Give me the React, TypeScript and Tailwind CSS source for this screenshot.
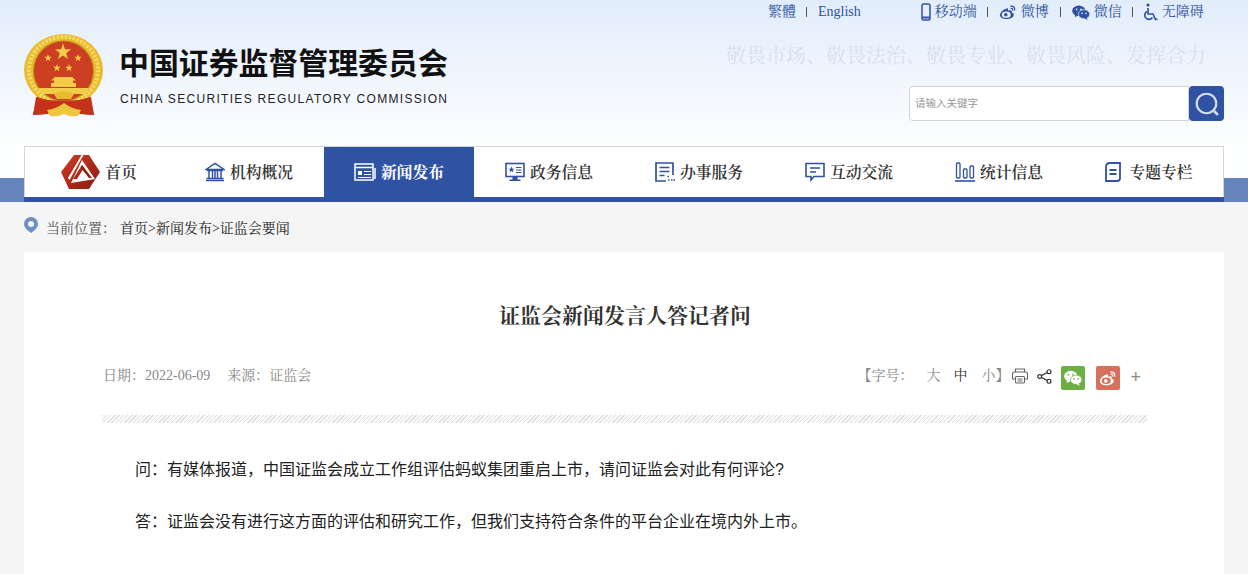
const serif = "font-['Liberation_Serif','Noto_Serif_CJK_SC','Noto_Sans_CJK_SC',serif]";
const sans = "font-['Liberation_Sans','Noto_Sans_CJK_SC',sans-serif]";

function Star({ x, y, r }: { x: number; y: number; r: number }) {
  const pts = Array.from({ length: 10 }, (_, i) => {
    const a = -Math.PI / 2 + (i * Math.PI) / 5;
    const d = i % 2 === 0 ? r : r * 0.4;
    return `${x + d * Math.cos(a)},${y + d * Math.sin(a)}`;
  }).join(" ");
  return <polygon points={pts} fill="#f3cc4a" />;
}

function Emblem() {
  return (
    <svg viewBox="0 0 80 84" className="h-[84px] w-[80px] shrink-0">
      <path d="M14 58 9 81l14-1 17-5 17 5 13 1-5-23z" fill="#c4321c" />
      <ellipse cx="39.500" cy="36" rx="39.500" ry="36" fill="#e9bb2e" />
      <ellipse cx="39.500" cy="36" rx="34.500" ry="33" fill="none" stroke="#f5d866" strokeWidth="4" strokeDasharray="2.500 1.500" />
      <circle cx="39.500" cy="37" r="30.500" fill="#b98d1f" />
      <circle cx="39.500" cy="37" r="29.500" fill="#cd3f22" />
      <Star x={39} y={18} r={8.500} />
      <Star x={24} y={24} r={4} />
      <Star x={54} y={24} r={4} />
      <Star x={33} y={34} r={4} />
      <Star x={45} y={34} r={4} />
      <path d="M31 43h17l4 3.500h-3V49h3v4H27v-4h3v-2.500h-3z" fill="#f3cc4a" />
      <path d="M14 54h51l-3 6H17z" fill="#f3cc4a" />
      <path d="M24 66 12 63l-3 18 14-1 17-5 17 5 13 1-3-18-12 3-15 1z" fill="#c4321c" />
      <path d="M30 60q10-6 20 0l-3 5H33z" fill="#e8bb31" />
      <path d="M23 76q9-1 17-7 8 6 17 7l-3 6q-8 1-14-2-6 3-14 2z" fill="#f0c63d" />
    </svg>
  );
}

function HomeLogo() {
  return (
    <svg viewBox="0 0 39 34" className="h-[34px] w-[39px]">
      <defs>
        <linearGradient id="homeA" x1="0" x2="1" y1="0" y2="1">
          <stop offset="0" stopColor="#d23c24" />
          <stop offset="1" stopColor="#8a1a12" />
        </linearGradient>
      </defs>
      <path d="M13 0h15l11 17-11 17H8L0 17z" fill="url(#homeA)" />
      <path d="M20.500 0h2L8.500 25 7 23z" fill="#fff" />
      <path d="M21 5 34 24 10 28z" fill="#fff" />
      <path d="M21 10l2 3-7 11h-4z" fill="#b02a18" />
      <path d="M21 10l10 13h-3l-8-10z" fill="#8f1c12" />
    </svg>
  );
}

const navIcon = "h-[22px] w-[22px] shrink-0";

function BankIcon() {
  return (
    <svg viewBox="0 0 20 20" fill="none" stroke="#2f52a2" strokeWidth="1.500" className="h-[20px] w-[20px] shrink-0">
      <path d="M1 7.500 10 1.500l9 6zM2 8.500h16M1 18.500h18M1.500 16.500h17M4 9v7M7.500 9v7M12.500 9v7M16 9v7M10 9v7" />
    </svg>
  );
}

function NewsIcon() {
  return (
    <svg viewBox="0 0 22 20" fill="none" stroke="#fff" strokeWidth="1.500" className={navIcon}>
      <rect x="1" y="2" width="18" height="16" />
      <path d="M1 5.500h18M21 6v11" />
      <rect x="4" y="9" width="4" height="4" fill="#fff" stroke="none" />
      <path d="M10 9.500h7M10 12.500h7M4 15.500h13" strokeWidth="1.200" />
    </svg>
  );
}

function ScreenIcon() {
  return (
    <svg viewBox="0 0 20 20" className="h-[20px] w-[20px] shrink-0">
      <rect x="1" y="1.500" width="18" height="13" fill="none" stroke="#2f52a2" strokeWidth="1.600" />
      <path d="M6.500 4.500l.9 2.200h2.200l-1.800 1.400.7 2.300-2-1.400-2 1.400.7-2.300-1.800-1.400h2.200z" fill="#2f52a2" />
      <path d="M11 5.500h5.500M11 8h5.500M11 10.500h5.500" stroke="#2f52a2" strokeWidth="1.200" />
      <path d="M7.500 15h5v2.500h3V19h-11v-1.500h3z" fill="#2f52a2" />
    </svg>
  );
}

function ListIcon() {
  return (
    <svg viewBox="0 0 20 20" fill="none" stroke="#2f52a2" strokeWidth="1.700" className="h-[20px] w-[20px] shrink-0">
      <path d="M18 13V1H1v18h10" />
      <path d="M4.500 5.500h10M4.500 9.500h10M4.500 13.500h5" />
      <path d="M13 18h1.500M16 18h1.500M18.500 18H20M12.500 14.500h1.500" strokeWidth="1.500" />
    </svg>
  );
}

function ChatIcon() {
  return (
    <svg viewBox="0 0 20 20" fill="none" stroke="#2f52a2" strokeWidth="1.600" className="h-[20px] w-[20px] shrink-0">
      <path d="M1 1.500h18v13H9l-3 3.500v-3.500H1z" />
      <path d="M5 6h10M5 10h6" />
    </svg>
  );
}

function ChartIcon() {
  return (
    <svg viewBox="0 0 20 20" fill="none" stroke="#2f52a2" strokeWidth="1.300" className="h-[20px] w-[20px] shrink-0">
      <rect x="1.500" y="1" width="3.500" height="15" rx="1" />
      <rect x="8.500" y="7" width="3.500" height="9" rx="1" />
      <rect x="15" y="4" width="3.500" height="12" rx="1" />
      <path d="M0 19h20" strokeWidth="1.600" />
    </svg>
  );
}

function DocIcon() {
  return (
    <svg viewBox="0 0 16 20" fill="none" stroke="#2f52a2" strokeWidth="1.800" className="mr-[3px] h-[20px] w-[16px] shrink-0">
      <path d="M5 1h10v15q0 3-3 3H1V5q0-4 4-4z" />
      <path d="M4.500 8h7M4.500 12h7" strokeWidth="2" />
    </svg>
  );
}

const navItems = [
  { label: "首页", icon: <HomeLogo /> },
  { label: "机构概况", icon: <BankIcon /> },
  { label: "新闻发布", icon: <NewsIcon />, active: true },
  { label: "政务信息", icon: <ScreenIcon /> },
  { label: "办事服务", icon: <ListIcon /> },
  { label: "互动交流", icon: <ChatIcon /> },
  { label: "统计信息", icon: <ChartIcon /> },
  { label: "专题专栏", icon: <DocIcon /> },
];

function WeiboGlyph({ fill, eye }: { fill: string; eye: string }) {
  return (
    <svg viewBox="0 0 20 18" className="h-full w-full">
      <path d="M8.500 5C4.500 6 1 9.500 1 12.500 1 15.500 4.500 17 8.500 17c4.500 0 8-2.500 8-5 0-1.500-1.500-2-2.500-2.300 1-2-.3-3.200-3.500-2.200-.3.100-.5 0-.4-.3.300-1.700-.300-2.700-1.600-2.200z" fill={fill} />
      <ellipse cx="8" cy="12" rx="5" ry="3.600" fill={eye} />
      <circle cx="7.500" cy="12.200" r="2" fill={fill} />
      <path d="M13 2.500c3-.6 5 1.500 4.500 4.500M13.500 5c1.400-.2 2 .6 1.800 1.800" fill="none" stroke={fill} strokeWidth="1.400" strokeLinecap="round" />
    </svg>
  );
}

function WechatGlyph({ fill, eye }: { fill: string; eye: string }) {
  return (
    <svg viewBox="0 0 20 17" className="h-full w-full">
      <ellipse cx="7.500" cy="6.500" rx="7.500" ry="6" fill={fill} />
      <path d="M3.500 10.500 3 14l3.500-2z" fill={fill} />
      <circle cx="5" cy="5" r="1" fill={eye} />
      <circle cx="10" cy="5" r="1" fill={eye} />
      <ellipse cx="13.500" cy="10.500" rx="6.500" ry="5.200" fill={fill} stroke={eye} strokeWidth="0.800" />
      <path d="M16.500 14.500 17.500 17l-3.500-1.800z" fill={fill} />
      <circle cx="11.300" cy="9.500" r=".9" fill={eye} />
      <circle cx="15.700" cy="9.500" r=".9" fill={eye} />
    </svg>
  );
}

function TopSep() {
  return <span className="ml-[10px] mr-[11px] h-[10px] w-px bg-[#555]" />;
}

function TopBar() {
  return (
    <div className={`${serif} flex h-[24px] items-center text-[14px] leading-none text-[#2f52a2]`}>
      <span className="ml-[768px]">繁體</span>
      <TopSep />
      <span>English</span>
      <svg viewBox="0 0 10 18" className="ml-[60px] h-[18px] w-[10px]" fill="none" stroke="#2f52a2" strokeWidth="1.500">
        <rect x="1" y="1" width="8" height="16" rx="1.500" />
        <path d="M1 14.500h8" strokeWidth="2" />
      </svg>
      <span className="ml-[4px]">移动端</span>
      <TopSep />
      <span className="h-[16px] w-[18px]"><WeiboGlyph fill="#2f52a2" eye="#e9f0fb" /></span>
      <span className="ml-[4px] mr-[1px]">微博</span>
      <TopSep />
      <span className="h-[15px] w-[18px]"><WechatGlyph fill="#2f52a2" eye="#e9f0fb" /></span>
      <span className="ml-[4px]">微信</span>
      <TopSep />
      <svg viewBox="0 0 14 18" className="h-[18px] w-[14px]" fill="none" stroke="#2f52a2" strokeWidth="1.600">
        <circle cx="4" cy="2" r="1.600" fill="#2f52a2" stroke="none" />
        <path d="M4 5v6h5l2.500 5.500L13.500 16" />
        <path d="M3 8.500a4.200 4.200 0 1 0 5.500 6" />
      </svg>
      <span className="ml-[4px]">无障碍</span>
    </div>
  );
}

function Header() {
  return (
    <header className="h-[146px] bg-gradient-to-b from-[#e2edfb] to-[#fdfeff]">
      <TopBar />
      <div className="flex">
        <div className="ml-[24px] mt-[10px]"><Emblem /></div>
        <div className={`${sans} ml-[16px] mt-[21px] w-[330px]`}>
          <div className="-ml-[1px] text-[29.900px] font-bold leading-[38px] whitespace-nowrap text-[#111]">中国证券监督管理委员会</div>
          <div className="mt-[8px] text-[12px] leading-[16px] tracking-[1.310px] whitespace-nowrap text-[#222]">CHINA SECURITIES REGULATORY COMMISSION</div>
        </div>
        <div className="ml-[276px] flex flex-col items-end">
          <div className={`${serif} mt-[20px] whitespace-nowrap text-[20px] leading-[24px] text-[#d8e0ee]`}>敬畏市场、敬畏法治、敬畏专业、敬畏风险、发挥合力</div>
          <div className="mt-[18px] mr-[-18px] flex h-[35px] w-[315px]">
            <div className={`${sans} flex flex-1 items-center rounded-l-[4px] border border-[#d3d3d3] bg-white pl-[5px] text-[10.500px] text-[#999]`}>请输入关键字</div>
            <div className="flex w-[35px] items-center justify-center rounded-[4px] bg-[#2f52a2]">
              <svg viewBox="0 0 24 24" fill="none" className="h-[26px] w-[26px]">
                <circle cx="11.500" cy="11.500" r="9" stroke="#d5deef" strokeWidth="2" />
                <path d="M18.500 18.500 22 22" stroke="#d5deef" strokeWidth="2.500" />
              </svg>
            </div>
          </div>
        </div>
      </div>
    </header>
  );
}

function Nav() {
  return (
    <div className="h-[56px] bg-[linear-gradient(to_bottom,#fdfeff_32px,#6484bb_32px)] px-[24px]">
      <nav className="flex h-full border-t border-b-[5px] border-t-[#d4d4d4] border-b-[#2f52a2] bg-white shadow-[inset_1px_0_#d4d4d4,inset_-1px_0_#d4d4d4]">
        {navItems.map((item) => (
          <div
            key={item.label}
            className={`${serif} flex flex-1 items-center justify-center gap-[5px] text-[15.800px] ${item.active ? "bg-[#2f52a2] font-bold text-white" : "font-semibold text-[#333]"}`}
          >
            {item.icon}
            <span className="whitespace-nowrap pt-[2px]">{item.label}</span>
          </div>
        ))}
      </nav>
    </div>
  );
}

function Breadcrumb() {
  return (
    <div className={`${serif} flex h-[50px] items-center pl-[24px] pt-[2px] text-[14px] text-[#222]`}>
      <svg viewBox="0 0 14 16" className="h-[16px] w-[14px] -translate-y-[3px]">
        <path d="M7 0a7 7 0 0 1 7 7c0 3.500-3.500 6.500-7 9-3.500-2.500-7-5.500-7-9a7 7 0 0 1 7-7z" fill="#6c8fc4" />
        <circle cx="7" cy="7" r="3" fill="#f5f5f5" />
      </svg>
      <span className="ml-[8px] text-[#555]">当前位置：</span>
      <span className="ml-[4px]">首页&gt;新闻发布&gt;证监会要闻</span>
    </div>
  );
}

function Article() {
  return (
    <article className="mx-[24px] h-[322px] bg-white px-[78px]">
      <h1 className={`${serif} pt-[49px] pl-[2px] text-center text-[21px] font-bold leading-[30px] text-[#333]`}>证监会新闻发言人答记者问</h1>
      <div className={`${serif} mt-[29px] flex h-[30px] items-center text-[14px] text-[#888]`}>
        <span className="ml-[1px]">日期：2022-06-09</span>
        <span className="ml-[17px]">来源：证监会</span>
        <div className="ml-auto flex items-center">
          <span>【字号：</span>
          <span className="ml-[13px]">大</span>
          <span className="ml-[13px] text-[#333]">中</span>
          <span className="ml-[14px]">小】</span>
          <svg viewBox="0 0 18 16" fill="none" stroke="#666" strokeWidth="1.100" className="ml-[2px] mt-[2px] h-[16px] w-[18px]">
            <path d="M4.500 4V1h9v3M4.500 11H1.500V6q0-2 2-2h11q2 0 2 2v5h-3" />
            <rect x="4.500" y="8.500" width="9" height="6.500" rx="1" />
            <path d="M6.500 11h5M6.500 13h5" />
          </svg>
          <svg viewBox="0 0 14 14" fill="none" stroke="#333" strokeWidth="1.100" className="ml-[8px] mt-[2px] h-[15px] w-[15px]">
            <circle cx="2.500" cy="7" r="1.800" />
            <circle cx="11.200" cy="2.500" r="1.800" />
            <circle cx="11.200" cy="11.500" r="1.800" />
            <path d="M4 6.200 9.600 3.300M4 7.800l5.600 2.900" />
          </svg>
          <span className="ml-[9px] mt-[6px] h-[24px] w-[24px] rounded-[2px] bg-[#6cb043] p-[3px]"><WechatGlyph fill="#fff" eye="#6cb043" /></span>
          <span className="ml-[11px] mt-[6px] h-[24px] w-[24px] rounded-[2px] bg-[#d6705c] p-[3px]"><WeiboGlyph fill="#fff" eye="#d6705c" /></span>
          <span className={`${sans} ml-[10px] mr-[5px] mt-[3px] text-[18px] font-light leading-none text-[#888]`}>+</span>
        </div>
      </div>
      <div className="mt-[25px] mr-[-1px] h-[8px] bg-[repeating-linear-gradient(135deg,#e0e0e0_0,#e0e0e0_1px,#fafafa_1px,#fafafa_3px)]" />
      <div className={`${sans} pl-[33px] pt-[34px] text-[16px] leading-[26px] text-[#222]`}>
        <p>问：有媒体报道，中国证监会成立工作组评估蚂蚁集团重启上市，请问证监会对此有何评论?</p>
        <p className="mt-[26px]">答：证监会没有进行这方面的评估和研究工作，但我们支持符合条件的平台企业在境内外上市。</p>
      </div>
    </article>
  );
}

export default function App() {
  return (
    <div className="h-[574px] overflow-hidden bg-[#f5f5f5]">
      <Header />
      <Nav />
      <Breadcrumb />
      <Article />
    </div>
  );
}
